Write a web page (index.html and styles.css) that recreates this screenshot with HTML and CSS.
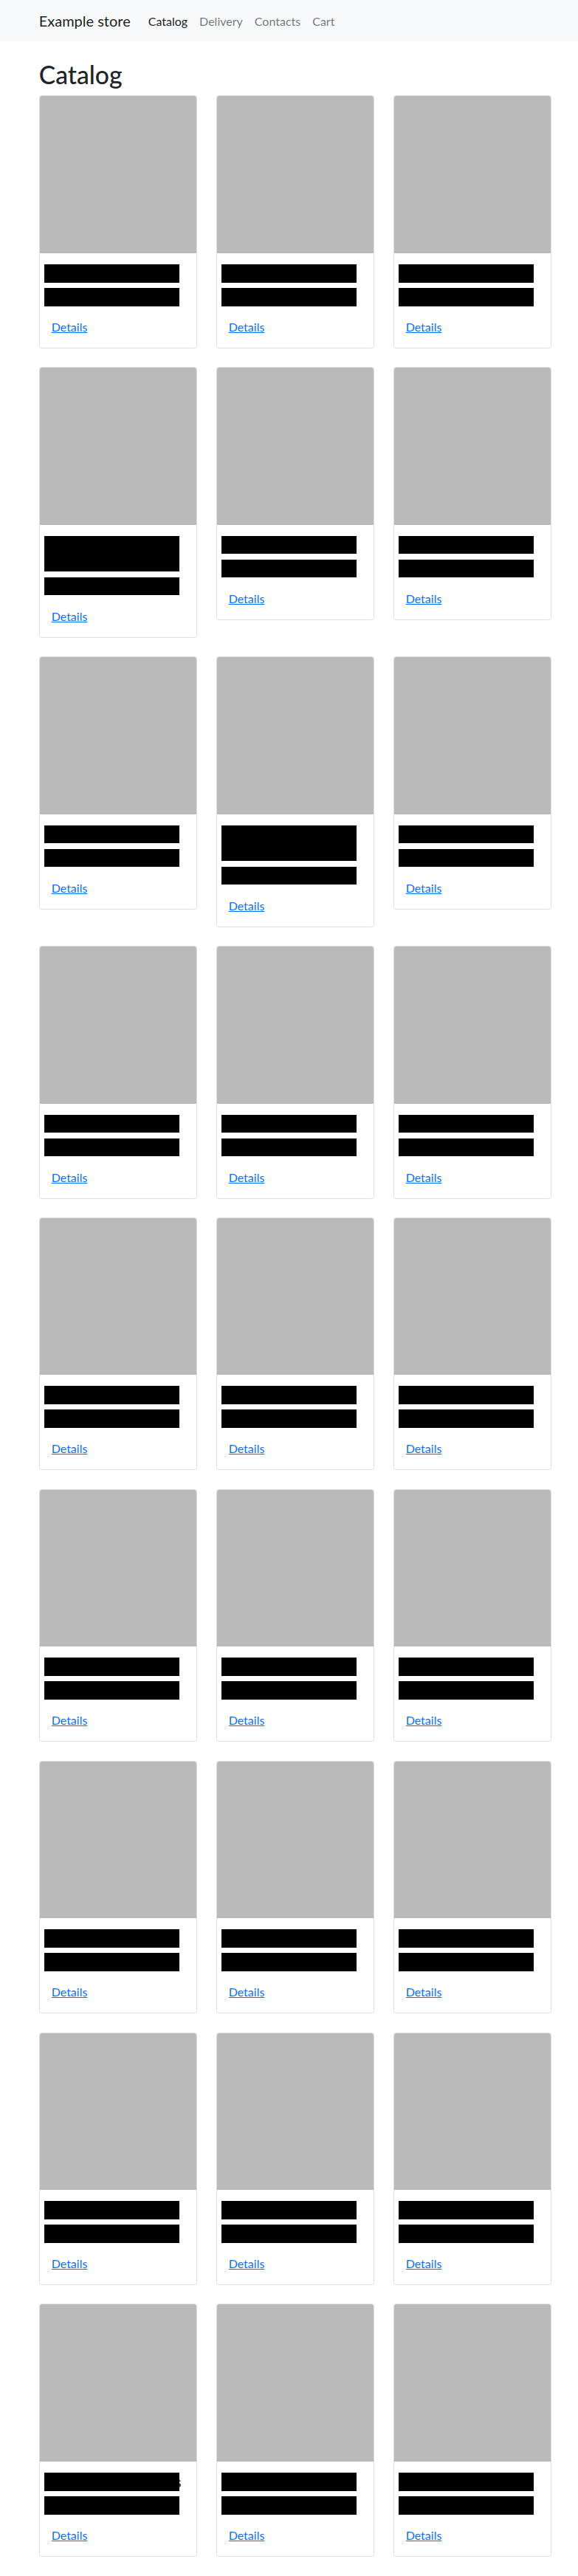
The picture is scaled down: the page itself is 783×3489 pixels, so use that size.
FILE: index.html
```html
<!DOCTYPE html>
<html lang="en">
<head>
    <meta charset="UTF-8">
    <meta name="viewport" content="width=device-width, initial-scale=1.0">
    <title>Example store</title>
    <link rel="stylesheet" href="styles.css">
</head>
<body>
    <nav class="navbar">
        <a class="brand" href="#">Example store</a>
        <a class="nav-link active" href="#">Catalog</a>
        <a class="nav-link" href="#">Delivery</a>
        <a class="nav-link" href="#">Contacts</a>
        <a class="nav-link" href="#">Cart</a>
    </nav>

    <main class="container">
        <h1 class="page-title">Catalog</h1>

        <div class="catalog">
            <!-- row 1 -->
            <div class="card"><div class="thumb"></div><div class="card-body"><div class="bar"></div><div class="bar"></div><a class="details" href="#">Details</a></div></div>
            <div class="card"><div class="thumb"></div><div class="card-body"><div class="bar"></div><div class="bar"></div><a class="details" href="#">Details</a></div></div>
            <div class="card"><div class="thumb"></div><div class="card-body"><div class="bar"></div><div class="bar"></div><a class="details" href="#">Details</a></div></div>
            <!-- row 2 -->
            <div class="card"><div class="thumb"></div><div class="card-body"><div class="bar tall"></div><div class="bar"></div><a class="details" href="#">Details</a></div></div>
            <div class="card"><div class="thumb"></div><div class="card-body"><div class="bar"></div><div class="bar"></div><a class="details" href="#">Details</a></div></div>
            <div class="card"><div class="thumb"></div><div class="card-body"><div class="bar"></div><div class="bar"></div><a class="details" href="#">Details</a></div></div>
            <!-- row 3 -->
            <div class="card"><div class="thumb"></div><div class="card-body"><div class="bar"></div><div class="bar"></div><a class="details" href="#">Details</a></div></div>
            <div class="card"><div class="thumb"></div><div class="card-body"><div class="bar tall"></div><div class="bar"></div><a class="details" href="#">Details</a></div></div>
            <div class="card"><div class="thumb"></div><div class="card-body"><div class="bar"></div><div class="bar"></div><a class="details" href="#">Details</a></div></div>
            <!-- row 4 -->
            <div class="card"><div class="thumb"></div><div class="card-body"><div class="bar"></div><div class="bar"></div><a class="details" href="#">Details</a></div></div>
            <div class="card"><div class="thumb"></div><div class="card-body"><div class="bar"></div><div class="bar"></div><a class="details" href="#">Details</a></div></div>
            <div class="card"><div class="thumb"></div><div class="card-body"><div class="bar"></div><div class="bar"></div><a class="details" href="#">Details</a></div></div>
            <!-- row 5 -->
            <div class="card"><div class="thumb"></div><div class="card-body"><div class="bar"></div><div class="bar"></div><a class="details" href="#">Details</a></div></div>
            <div class="card"><div class="thumb"></div><div class="card-body"><div class="bar"></div><div class="bar"></div><a class="details" href="#">Details</a></div></div>
            <div class="card"><div class="thumb"></div><div class="card-body"><div class="bar"></div><div class="bar"></div><a class="details" href="#">Details</a></div></div>
            <!-- row 6 -->
            <div class="card"><div class="thumb"></div><div class="card-body"><div class="bar"></div><div class="bar"></div><a class="details" href="#">Details</a></div></div>
            <div class="card"><div class="thumb"></div><div class="card-body"><div class="bar"></div><div class="bar"></div><a class="details" href="#">Details</a></div></div>
            <div class="card"><div class="thumb"></div><div class="card-body"><div class="bar"></div><div class="bar"></div><a class="details" href="#">Details</a></div></div>
            <!-- row 7 -->
            <div class="card"><div class="thumb"></div><div class="card-body"><div class="bar"></div><div class="bar"></div><a class="details" href="#">Details</a></div></div>
            <div class="card"><div class="thumb"></div><div class="card-body"><div class="bar"></div><div class="bar"></div><a class="details" href="#">Details</a></div></div>
            <div class="card"><div class="thumb"></div><div class="card-body"><div class="bar"></div><div class="bar"></div><a class="details" href="#">Details</a></div></div>
            <!-- row 8 -->
            <div class="card"><div class="thumb"></div><div class="card-body"><div class="bar"></div><div class="bar"></div><a class="details" href="#">Details</a></div></div>
            <div class="card"><div class="thumb"></div><div class="card-body"><div class="bar"></div><div class="bar"></div><a class="details" href="#">Details</a></div></div>
            <div class="card"><div class="thumb"></div><div class="card-body"><div class="bar"></div><div class="bar"></div><a class="details" href="#">Details</a></div></div>
            <!-- row 9 -->
            <div class="card"><div class="thumb"></div><div class="card-body"><div class="title-line"><div class="bar"></div><span class="peek">s</span></div><div class="bar"></div><a class="details" href="#">Details</a></div></div>
            <div class="card"><div class="thumb"></div><div class="card-body"><div class="bar"></div><div class="bar"></div><a class="details" href="#">Details</a></div></div>
            <div class="card"><div class="thumb"></div><div class="card-body"><div class="bar"></div><div class="bar"></div><a class="details" href="#">Details</a></div></div>
        </div>
    </main>
</body>
</html>
```

FILE: styles.css
```css
body {
    margin: 0;
    font-family: Lato, "Liberation Sans", sans-serif;
    color: #212529;
    background: #fff;
}
a {
    color: #0d6efd;
}

/* top bar */
.navbar {
    display: flex;
    align-items: center;
    height: 56px;
    padding: 0 52.7px;
    background: #f8f9fa;
}
.brand {
    font-size: 20px;
    color: rgba(0, 0, 0, .9);
    text-decoration: none;
    margin-right: 16px;
}
.nav-link {
    font-size: 16px;
    padding: 8px;
    color: rgba(0, 0, 0, .55);
    text-decoration: none;
}
.nav-link.active {
    color: rgba(0, 0, 0, .9);
}

/* page */
.container {
    padding: 0 0 25px 52.7px;
}
.page-title {
    font-size: 33.7px;
    font-weight: 500;
    line-height: 40.4px;
    margin: 24.9px 0 8px;
}
.catalog {
    display: grid;
    grid-template-columns: repeat(3, 214.67px);
    gap: 25.33px;
    align-items: start;
}
.card {
    border: 1px solid rgba(0, 0, 0, .125);
    border-radius: 4px;
    overflow: hidden;
    background: #fff;
}
.thumb {
    height: 212.6px;
    background: #bababa;
}
.card-body {
    display: flex;
    flex-direction: column;
    align-items: flex-start;
    padding: 15px 0 16px;
}
.bar {
    width: 183px;
    height: 24.7px;
    margin-left: 6.3px;
    background: #000;
}
.bar + .bar,
.title-line + .bar {
    margin-top: 7.3px;
}
.bar.tall {
    height: 48.7px;
}
.title-line {
    display: flex;
    align-items: center;
}
.title-line .bar {
    position: relative;
    z-index: 1;
}
/* last letter of a redacted title, mostly hidden under the bar */
.peek {
    margin-left: -6px;
    font-size: 20px;
    line-height: 24px;
}
.details {
    margin: 16.3px 0 0 16px;
    font-size: 16px;
    line-height: 24px;
}
```
